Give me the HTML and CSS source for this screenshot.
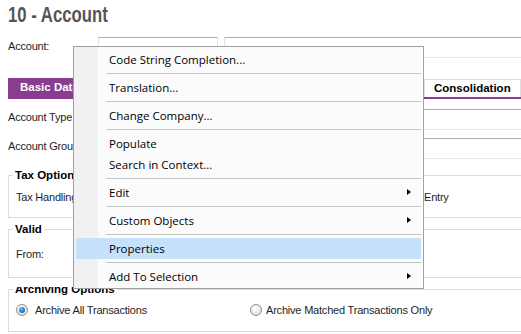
FILE: index.html
```html
<!DOCTYPE html>
<html>
<head>
<meta charset="utf-8">
<title>10 - Account</title>
<link rel="stylesheet" href="styles.css">
</head>
<body>
<div class="page">
  <h1 class="title"><span class="title-text">10 - Account</span></h1>

  <div class="row row-account">
    <span class="lbl">Account:</span>
    <div class="input input-short"></div>
    <div class="input input-long"></div>
  </div>

  <div class="tabs">
    <div class="tab tab-active">Basic Data</div>
    <div class="tab tab-hidden"></div>
    <div class="tab tab-hidden"></div>
    <div class="tab tab-cons">Consolidation</div>
  </div>

  <div class="row row-field">
    <span class="lbl">Account Type</span>
    <div class="input input-wide"></div>
  </div>
  <div class="row row-field">
    <span class="lbl">Account Group</span>
    <div class="input input-wide"></div>
  </div>

  <fieldset class="group group-tax">
    <legend>Tax Options</legend>
    <div class="grow">
      <span class="glbl">Tax Handling</span>
      <span class="entry">Entry</span>
    </div>
  </fieldset>

  <fieldset class="group group-valid">
    <legend>Valid</legend>
    <div class="grow">
      <span class="glbl">From:</span>
    </div>
  </fieldset>

  <fieldset class="group group-arch">
    <legend class="legend-clipped">Archiving Options</legend>
    <div class="grow radios">
      <label class="opt opt-first"><span class="radio radio-on"></span>Archive All Transactions</label>
      <label class="opt opt-second"><span class="radio"></span>Archive Matched Transactions Only</label>
    </div>
  </fieldset>
</div>

<div class="menu">
  <div class="mi">Code String Completion...</div>
  <div class="sep"></div>
  <div class="mi">Translation...</div>
  <div class="sep"></div>
  <div class="mi">Change Company...</div>
  <div class="sep"></div>
  <div class="mi">Populate</div>
  <div class="mi">Search in Context...</div>
  <div class="sep"></div>
  <div class="mi mi-sub">Edit<span class="arrow"></span></div>
  <div class="sep"></div>
  <div class="mi mi-sub">Custom Objects<span class="arrow"></span></div>
  <div class="sep"></div>
  <div class="mi mi-hover">Properties</div>
  <div class="sep"></div>
  <div class="mi mi-sub">Add To Selection<span class="arrow"></span></div>
</div>
</body>
</html>
```

FILE: styles.css
```css
html, body {
  margin: 0;
  padding: 0;
  background: #ffffff;
  overflow: hidden;
}
body {
  width: 521px;
  height: 334px;
  position: relative;
  font-family: "Liberation Sans", Arial, sans-serif;
  font-size: 11px;
  color: #1e1e1e;
}
.page {
  padding-left: 8px;
  width: 640px;
}
.title {
  margin: 0;
  height: 30px;
  line-height: 30px;
  font-family: "Liberation Sans", Arial, sans-serif;
  font-weight: bold;
  font-size: 22px;
  color: #555555;
}
.title-text {
  display: inline-block;
  transform: scaleX(0.76);
  transform-origin: 0 50%;
  white-space: nowrap;
}
.row {
  display: flex;
  align-items: flex-start;
}
.lbl {
  width: 90px;
  flex: none;
  line-height: 18px;
  letter-spacing: -0.2px;
}
.row-account {
  margin-top: 7px;
  height: 21px;
}
.input {
  box-sizing: border-box;
  height: 21px;
  border: 1px solid #e2e3ea;
  border-top-color: #abadb3;
  border-bottom-color: #e3e9ef;
  background: #fff;
}
.input-short {
  width: 120px;
}
.input-long {
  width: 320px;
  margin-left: 6px;
}
.input-wide {
  width: 520px;
}
.tabs {
  margin-top: 20px;
  display: flex;
  height: 19px;
  border-bottom: 2px solid #8a3d8e;
}
.tab {
  font-weight: bold;
  font-size: 11.5px;
  line-height: 19px;
  height: 19px;
  box-sizing: border-box;
  padding: 0 12px;
  color: #000;
}
.tab-active {
  background: #8a3d8e;
  color: #ffffff;
  width: 96px;
}
.tab-hidden:nth-child(2) { width: 130px; }
.tab-hidden:nth-child(3) { width: 190px; }
.tab-cons {
  margin-top: 1px;
  height: 18px;
  line-height: 16px;
  border: 1px solid #dddddd;
  border-bottom: none;
  width: 97px;
  padding: 0 0 0 9px;
  color: #000;
}
.row-field {
  height: 21px;
}
.tabs + .row-field {
  margin-top: 10px;
}
.row-field + .row-field {
  margin-top: 8px;
}
.row-field .lbl {
  line-height: 16px;
}
.group {
  margin: 0;
  border: 1px solid #dcdcdc;
  padding: 0 0 0 4px;
  width: 620px;
  box-sizing: border-box;
}
.group legend {
  padding: 0 2px;
  font-weight: bold;
  font-size: 11.5px;
  line-height: 14px;
  color: #000;
}
.group legend.legend-clipped {
  padding-top: 1px;
  line-height: 13px;
  clip-path: inset(5px 0 0 0);
}
.grow {
  display: flex;
  align-items: center;
  height: 16px;
  line-height: 16px;
  padding-left: 3px;
  letter-spacing: -0.2px;
}
.glbl {
  width: 100px;
  flex: none;
}
.entry {
  margin-left: 308px;
}
.group-tax {
  margin-top: 9px;
  padding-top: 7px;
  padding-bottom: 12px;
}
.group-valid {
  margin-top: 4px;
  padding-top: 10px;
  padding-bottom: 15px;
}
.group-arch {
  margin-top: 4px;
  padding-top: 6px;
  padding-bottom: 13px;
}
.opt {
  display: flex;
  align-items: center;
}
.opt-first {
  width: 234px;
  flex: none;
}
.radio {
  box-sizing: border-box;
  width: 12px;
  height: 12px;
  border-radius: 50%;
  border: 1px solid #8e8f8f;
  background: radial-gradient(circle at 40% 35%, #ffffff 0%, #f0f0f0 40%, #d4d4d4 100%);
  margin: 0 7px 0 0;
  position: relative;
  flex: none;
}
.opt-second .radio {
  margin: 0 4px 0 0;
}
.radio-on::after {
  content: "";
  position: absolute;
  left: 2px;
  top: 2px;
  width: 6px;
  height: 6px;
  border-radius: 50%;
  background: radial-gradient(circle at 40% 35%, #7fc4f5 0%, #2a86d0 45%, #0f4e8e 100%);
}

/* context menu */
.menu {
  position: absolute;
  left: 73px;
  top: 46px;
  width: 351px;
  box-sizing: border-box;
  border: 1px solid #a0a0a0;
  padding: 2px 2px 1px 2px;
  background: linear-gradient(to right, #f1f1f1 0, #f1f1f1 24px, #fbfbfb 24px, #fbfbfb 100%);
  font-family: "Open Sans", "Noto Sans", sans-serif;
  font-size: 11.5px;
  color: #000;
}
.mi {
  height: 21px;
  line-height: 21px;
  padding-left: 33px;
  position: relative;
  white-space: nowrap;
}
.mi-hover {
  background: #c5e1fb;
}
.sep {
  height: 7px;
  margin-left: 30px;
  background: linear-gradient(#c5c5c5, #c5c5c5) no-repeat 0 3px / 100% 1px;
}
.arrow {
  position: absolute;
  right: 10px;
  top: 7px;
  width: 0;
  height: 0;
  border-left: 4px solid #000;
  border-top: 3.5px solid transparent;
  border-bottom: 3.5px solid transparent;
}
```
